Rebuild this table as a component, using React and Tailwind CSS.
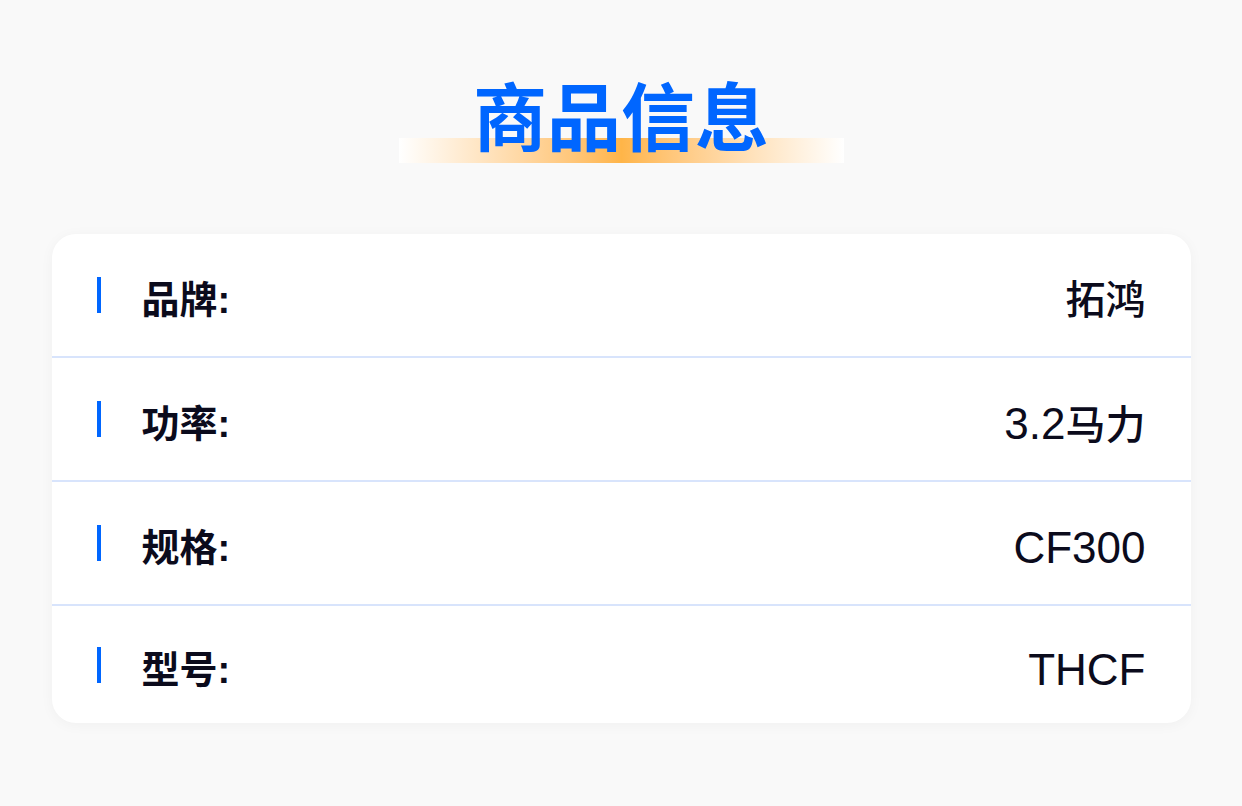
const rows = [
  { label: "品牌:", value: "拓鸿" },
  { label: "功率:", value: "3.2马力" },
  { label: "规格:", value: "CF300" },
  { label: "型号:", value: "THCF" },
];

// Latin runs render a touch larger than CJK runs in the reference
function Value({ text }) {
  const parts = text.match(/[\u4e00-\u9fff]+|[^\u4e00-\u9fff]+/g) || [];
  return (
    <span className="flex items-baseline pt-[10px] text-[#0b0b1c]">
      {parts.map((p, i) =>
        /[\u4e00-\u9fff]/.test(p) ? (
          <span key={i} className="text-[40px] font-medium">{p}</span>
        ) : (
          <span key={i} className="text-[44px]">{p}</span>
        )
      )}
    </span>
  );
}

export default function App() {
  return (
    <div
      className="min-h-[806px] w-full bg-[#f9f9f9] flex flex-col items-center"
      style={{ fontFamily: '"Liberation Sans", "Noto Sans CJK SC", sans-serif' }}
    >
      {/* Title */}
      <div className="relative mt-[79px] w-[445px] h-[84px] flex justify-center">
        <div className="absolute left-0 right-0 top-[59px] h-[25px] bg-gradient-to-r from-white via-[#ffb548] to-white" />
        <h1 className="relative text-[74px] leading-[82px] font-bold text-[#0066ff]">
          商品信息
        </h1>
      </div>

      {/* Card */}
      <div className="mt-[71px] w-[1139px] bg-white rounded-[24px] shadow-[0_2px_14px_rgba(0,0,0,0.04)] flex flex-col">
        {rows.map((row, i) => (
          <div
            key={row.label}
            className={
              "flex items-center justify-between px-[45px] " +
              (i < rows.length - 1 ? "h-[124px] border-b-2 border-[#d8e4fc]" : "h-[117px]")
            }
          >
            <div className="flex items-center gap-[41px]">
              <div className="w-[4px] h-[36px] bg-[#0066ff]" />
              <span className="pt-[10px] text-[38px] leading-[44px] font-bold text-[#0b0b1c]">
                {row.label}
              </span>
            </div>
            <Value text={row.value} />
          </div>
        ))}
      </div>
    </div>
  );
}
